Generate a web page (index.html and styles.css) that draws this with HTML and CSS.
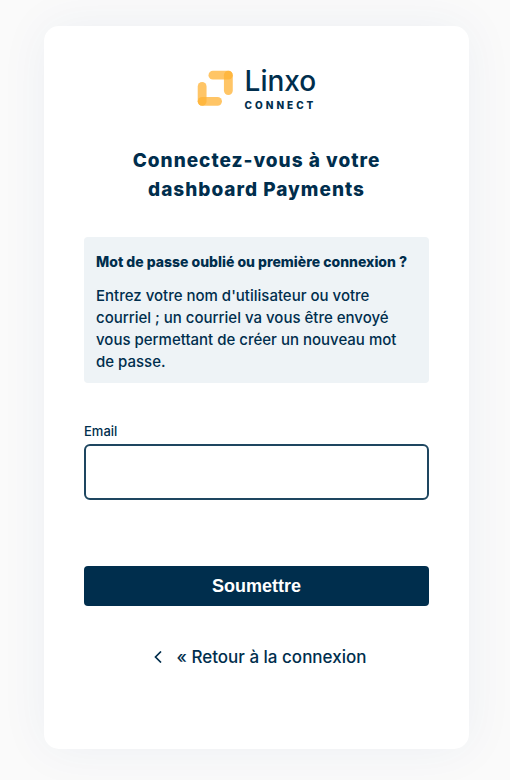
FILE: index.html
```html
<!DOCTYPE html>
<html lang="fr">
<head>
  <meta charset="UTF-8">
  <meta name="viewport" content="width=device-width, initial-scale=1.0">
  <title>Linxo Connect</title>
  <link rel="stylesheet" href="styles.css">
</head>
<body>

<main class="card">
  <div class="logo">
    <svg class="logo-mark" viewBox="0 0 36 36" aria-hidden="true">
      <g fill="none" stroke="#ffb133" stroke-opacity="0.75" stroke-width="8.6" stroke-linecap="round">
        <path d="M15.5 5H30.5"/>
        <path d="M30.5 5V20"/>
        <path d="M5 16V30.5"/>
        <path d="M5 30.5H20"/>
      </g>
    </svg>
    <div class="logo-text">
      <span class="logo-name">Linxo</span>
      <span class="logo-sub">CONNECT</span>
    </div>
  </div>

  <h1>Connectez-vous à votre dashboard Payments</h1>

  <div class="info">
    <h2>Mot de passe oublié ou première connexion ?</h2>
    <p>Entrez votre nom d'utilisateur ou votre courriel ; un courriel va vous être envoyé vous permettant de créer un nouveau mot de passe.</p>
  </div>

  <form>
    <label for="email">Email</label>
    <input type="text" id="email" name="email">
    <button type="submit">Soumettre</button>
  </form>

  <a class="back" href="#">
    <svg class="back-icon" viewBox="0 0 8 12" aria-hidden="true">
      <path d="M7 0.5L1.5 6L7 11.5" fill="none" stroke="#002e4d" stroke-width="1.7"/>
    </svg>
    <span>« Retour à la connexion</span>
  </a>
</main>

</body>
</html>
```
FILE: styles.css
```css
* {
  box-sizing: border-box;
}
body {
  margin: 0;
  padding: 26px 41px 31px 44px;
  background-color: #fafafa;
  font-family: Inter, "Liberation Sans", sans-serif;
  color: #002e4d;
}
.card {
  max-width: 425px;
  margin: 0 auto;
  padding: 37px 40px 80px;
  background-color: white;
  border-radius: 15px;
  box-shadow: 0 0 50px rgba(0, 64, 128, 0.06);
}
.logo {
  display: flex;
  justify-content: center;
  align-items: center;
  gap: 11px;
  height: 50px;
}
.logo-mark {
  width: 37px;
  height: 37px;
}
.logo-text {
  display: flex;
  flex-direction: column;
}
.logo-name {
  font-size: 28px;
  line-height: 34px;
  font-weight: 500;
}
.logo-sub {
  font-size: 10px;
  line-height: 14px;
  font-weight: 800;
  letter-spacing: 3px;
}
h1 {
  margin: 33px 0;
  font-size: 19px;
  line-height: 29px;
  font-weight: 800;
  letter-spacing: 1px;
  text-align: center;
}
.info {
  padding: 14px 12px 10px;
  border-radius: 4px;
  background-color: #eef3f6;
  font-size: 15px;
  line-height: 22px;
}
.info h2 {
  margin: 0 0 12px;
  font-size: 14px;
  font-weight: 800;
}
.info p {
  margin: 0;
  font-weight: 500;
}
form {
  margin-top: 39px;
}
label {
  display: block;
  font-size: 13px;
  line-height: 18px;
  font-weight: 500;
}
input {
  display: block;
  width: 100%;
  height: 56px;
  margin-top: 4px;
  padding: 0 12px;
  border: 2px solid #1e4660;
  border-radius: 6px;
  background-color: white;
  font-size: 16px;
}
button {
  width: 100%;
  height: 40px;
  margin-top: 66px;
  border: none;
  border-radius: 4px;
  background-color: #002e4d;
  color: white;
  font-family: "Liberation Sans", Arial, sans-serif;
  font-size: 18px;
  font-weight: 700;
  cursor: pointer;
}
.back {
  display: flex;
  justify-content: center;
  align-items: center;
  gap: 15px;
  margin-top: 39px;
  padding-left: 7px;
  color: #002e4d;
  font-size: 17px;
  line-height: 24px;
  font-weight: 500;
  text-decoration: none;
}
.back-icon {
  width: 8px;
  height: 12px;
}
```
